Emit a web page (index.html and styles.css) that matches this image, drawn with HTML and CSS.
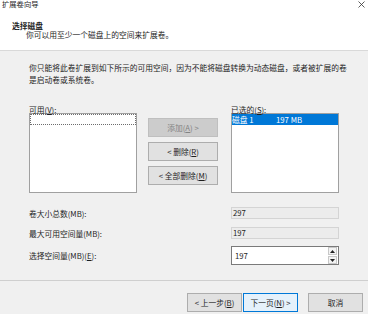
FILE: index.html
```html
<!DOCTYPE html>
<html>
<head>
    <title>扩展卷向导</title>
    <link rel="stylesheet" href="styles.css">
</head>
<body>
    <div class="titlebar">
        <span>扩展卷向导</span>
        <svg class="close" width="7" height="7" viewBox="0 0 7 7">
            <path d="M0.5 0.5 L6.5 6.5 M6.5 0.5 L0.5 6.5" stroke="#333" stroke-width="0.8" fill="none"/>
        </svg>
    </div>

    <div class="header">
        <div class="heading">选择磁盘</div>
        <div class="subtitle">你可以用至少一个磁盘上的空间来扩展卷。</div>
    </div>

    <div class="body">
        <p class="intro">你只能将此卷扩展到如下所示的可用空间，因为不能将磁盘转换为动态磁盘，或者被扩展的卷<br>是启动卷或系统卷。</p>

        <div class="picker">
            <div class="column">
                <div class="label">可用(<u>V</u>):</div>
                <div class="listbox">
                    <div class="focusRow"></div>
                </div>
            </div>

            <div class="actions">
                <button class="btn disabled">添加(<u>A</u>) &gt;</button>
                <button class="btn">&lt; 删除(<u>R</u>)</button>
                <button class="btn">&lt; 全部删除(<u>M</u>)</button>
            </div>

            <div class="column">
                <div class="label">已选的(<u>S</u>):</div>
                <div class="listbox">
                    <div class="selectedRow"><span class="diskName">磁盘 1</span><span>197 MB</span></div>
                </div>
            </div>
        </div>

        <div class="fields">
            <div class="row">
                <div class="name">卷大小总数(MB):</div>
                <div class="readonly">297</div>
            </div>
            <div class="row">
                <div class="name">最大可用空间量(MB):</div>
                <div class="readonly">197</div>
            </div>
            <div class="row spinRow">
                <div class="name">选择空间量(MB)(<u>E</u>):</div>
                <div class="spinbox">
                    <span class="value">197</span>
                    <div class="spinner">
                        <span><svg width="5" height="3" viewBox="0 0 5 3"><path d="M2.5 0 L5 3 L0 3 Z" fill="#222"/></svg></span>
                        <span><svg width="5" height="3" viewBox="0 0 5 3"><path d="M0 0 L5 0 L2.5 3 Z" fill="#222"/></svg></span>
                    </div>
                </div>
            </div>
        </div>
    </div>

    <div class="footer">
        <button class="btn wide">&lt; 上一步(<u>B</u>)</button>
        <button class="btn wide next">下一页(<u>N</u>) &gt;</button>
        <button class="btn wide cancel">取消</button>
    </div>
</body>
</html>
```

FILE: styles.css
```css
* {
    box-sizing: border-box;
}

body {
    margin: 0;
    width: 368px;
    height: 314px;
    overflow: hidden;
    background-color: #f0f0f0;
    font-family: "Noto Sans CJK SC", sans-serif;
    font-size: 7.75px;
    color: #1e1e1e;
}

.titlebar {
    height: 12px;
    padding: 0 3px 0 2px;
    display: flex;
    justify-content: space-between;
    background-color: #ffffff;
    font-size: 7.3px;
    line-height: 9px;
}

.close {
    margin-top: 1px;
}

.header {
    height: 39px;
    padding-top: 9px;
    background-color: #ffffff;
    border-bottom: 1px solid #d9d9d9;
    line-height: 9px;
}

.heading {
    padding-left: 12px;
    font-weight: bold;
}

.subtitle {
    padding-left: 26px;
}

.body {
    padding: 11px 0 0 29px;
}

.intro {
    margin: 0;
    line-height: 12px;
}

.picker {
    display: flex;
    margin-top: 20px;
}

.column {
    width: 108px;
}

.label {
    height: 7px;
    line-height: 7px;
}

.listbox {
    height: 80px;
    background-color: #ffffff;
    border: 1px solid #a0a0a0;
}

.focusRow {
    height: 11px;
    border: 1px dotted #6d6d6d;
}

.selectedRow {
    height: 11px;
    display: flex;
    background-color: #0078d7;
    color: #ffffff;
    line-height: 11px;
}

.diskName {
    width: 44px;
}

.actions {
    width: 70px;
    margin: 0 13px 0 11px;
    padding-top: 12px;
    display: flex;
    flex-direction: column;
    gap: 5px;
}

.btn {
    height: 19px;
    padding: 0;
    background-color: #e1e1e1;
    border: 1px solid #adadad;
    font: inherit;
    color: inherit;
    line-height: 17px;
}

.btn.disabled {
    background-color: #cccccc;
    border-color: #bfbfbf;
    color: #838383;
}

.fields {
    margin-top: 14px;
    display: flex;
    flex-direction: column;
    gap: 8px;
}

.row {
    display: flex;
    align-items: center;
}

.spinRow {
    margin-top: -1px;
}

.name {
    width: 202px;
}

.readonly {
    width: 108px;
    height: 12px;
    padding-left: 1px;
    background-color: #ececec;
    border: 1px solid #d4d4d4;
    line-height: 10px;
}

.spinbox {
    width: 108px;
    height: 19px;
    padding: 0 1px 0 3px;
    display: flex;
    align-items: center;
    background-color: #ffffff;
    border: 1px solid #7a7a7a;
}

.value {
    flex: 1;
}

.spinner {
    display: flex;
    flex-direction: column;
    gap: 1px;
}

.spinner span {
    width: 9px;
    height: 8px;
    display: flex;
    align-items: center;
    justify-content: center;
    background-color: #f3f3f3;
    border: 1px solid #c8c8c8;
}

.footer {
    margin-top: 15px;
    padding: 12px 5px 0 0;
    display: flex;
    justify-content: flex-end;
    border-top: 1px solid #cfcfcf;
}

.btn.wide {
    width: 55px;
}

.btn.next {
    margin-left: 1px;
    background-color: #e5f1fb;
    border-color: #0078d7;
}

.btn.cancel {
    margin-left: 10px;
}
```
